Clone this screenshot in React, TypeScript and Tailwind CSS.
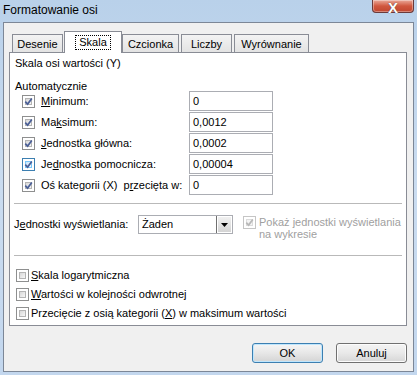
import React from "react";

// "Formatowanie osi" dialog – Vista style, tab "Skala"

type CheckProps = { checked?: boolean; hot?: boolean; disabled?: boolean };

function Check({ checked = false, hot = false, disabled = false }: CheckProps) {
  const outer = disabled
    ? "border-[#c5c5c5]"
    : hot
      ? "border-[#3c7fb1]"
      : "border-[#8e8f8f]";
  const inner = disabled
    ? "from-[#f4f4f4] to-[#f4f4f4] border-[#dcdcdc]"
    : hot
      ? "from-[#c6e4fb] to-[#f2f9fe] border-[#79c6f9]"
      : "from-[#d8d8d8] to-[#f7f7f7] border-[#b4b4b4]";
  return (
    <span className={["relative flex h-[13px] w-[13px] shrink-0 items-center justify-center border bg-white", outer].join(" ")}>
      <span className={["absolute inset-[2px] border bg-gradient-to-br", inner].join(" ")} />
      {checked && (
        <svg viewBox="0 0 9 9" className="relative h-[9px] w-[9px]">
          <path
            d="M1.3 4.6 L3.6 7.1 L7.8 1.4"
            fill="none"
            stroke={disabled ? "#b8b8b8" : "#4a5f97"}
            strokeWidth="1.7"
          />
        </svg>
      )}
    </span>
  );
}

function Key({ children }: { children: React.ReactNode }) {
  return <span className="underline underline-offset-[1px]">{children}</span>;
}

function Field({ value }: { value: string }) {
  return (
    <div className="flex h-[20px] w-[84px] items-center border border-[#abadb3] bg-white pl-[3px] text-black">
      {value}
    </div>
  );
}

function Tab({ label, className }: { label: string; className: string }) {
  return (
    <div
      className={[
        "flex h-[18px] items-center justify-center border border-b-0 border-[#898c95] bg-gradient-to-b from-[#f3f3f3] to-[#e3e3e3] pt-px",
        className,
      ].join(" ")}
    >
      {label}
    </div>
  );
}

const autoRows: { label: React.ReactNode; value: string; hot?: boolean }[] = [
  { label: <><Key>M</Key>inimum:</>, value: "0" },
  { label: <>Ma<Key>k</Key>simum:</>, value: "0,0012" },
  { label: <><Key>J</Key>ednostka główna:</>, value: "0,0002" },
  { label: <>Je<Key>d</Key>nostka pomocnicza:</>, value: "0,00004", hot: true },
  { label: <>Oś kategorii (X)&nbsp; p<Key>r</Key>zecięta w:</>, value: "0" },
];

const options: React.ReactNode[] = [
  <><Key>S</Key>kala logarytmiczna</>,
  <><Key>W</Key>artości w kolejności odwrotnej</>,
  <>Przecięcie z osią kategorii (<Key>X</Key>) w maksimum wartości</>,
];

export default function App() {
  return (
    <div className="relative h-[375px] w-[417px] overflow-hidden bg-gradient-to-b from-[#b9d1ea] via-[#cadcf0] to-[#c3d7ee] font-['Liberation_Sans',Arial,sans-serif] text-[11px] text-black">
      {/* Title bar */}
      <div className="flex h-[22px] items-center pl-[3px] pb-[2px] text-[12px] text-black">
        Formatowanie osi
      </div>
      <div className="absolute right-[3px] top-0 flex h-[13px] w-[42px] items-end justify-center rounded-b-[4px] border border-t-0 border-[#6b3a3a] bg-gradient-to-b from-[#e9a99a] via-[#d0573f] to-[#c0462f] shadow-[inset_0_0_0_1px_rgba(255,255,255,0.35)]">
        <span className="mb-[-3px] text-[15px] font-bold leading-[15px] text-white [text-shadow:0_0_1px_#333]">X</span>
      </div>

      {/* Client area */}
      <div className="ml-[3px] h-[350px] w-[411px] border border-[#7c8797] bg-[#f0f0f0]">
        {/* Tabs */}
        <div className="flex h-[29px] items-end pl-[8px]">
          <Tab label="Desenie" className="w-[51px]" />
          <div className="relative z-10 -mb-px ml-px flex h-[22px] w-[58px] items-center justify-center border border-b-0 border-[#898c95] bg-white pb-px">
            <span className="border border-dotted border-black px-[3px] leading-[13px]">Skala</span>
          </div>
          <Tab label="Czcionka" className="w-[57px]" />
          <Tab label="Liczby" className="ml-[2px] w-[51px]" />
          <Tab label="Wyrównanie" className="ml-[2px] w-[75px]" />
        </div>

        {/* Tab panel */}
        <div className="ml-[5px] h-[274px] w-[398px] border border-[#898c95] bg-white">
          <div className="ml-[5px] mt-[3px] h-[14px] leading-[14px]">Skala osi wartości (Y)</div>
          <div className="ml-[5px] mt-[9px] h-[14px] leading-[14px]">Automatycznie</div>

          <div className="-mt-[2px]">
            {autoRows.map((r, i) => (
              <div key={i} className="flex h-[21px] items-start pl-[12px]">
                <div className="flex h-[20px] items-center">
                  <Check checked hot={r.hot} />
                </div>
                <div className="ml-[6px] flex h-[20px] w-[148px] items-center">{r.label}</div>
                <Field value={r.value} />
              </div>
            ))}
          </div>

          <div className="mx-[4px] mt-[7px] h-px bg-[#b9b9b9]" />

          {/* Display units */}
          <div className="mt-[11px] flex h-[40px] items-start pl-[4px]">
            <div className="h-[19px] w-[124px] leading-[19px]">
              J<Key>e</Key>dnostki wyświetlania:
            </div>
            <div className="flex h-[19px] w-[95px] items-center justify-between border border-[#abadb3] bg-white pl-[3px]">
              <span>Żaden</span>
              <div className="flex h-[17px] w-[16px] items-center justify-center border-l border-[#707070] bg-gradient-to-b from-[#f2f2f2] to-[#d2d2d2] shadow-[inset_0_0_0_1px_#fff]">
                <svg viewBox="0 0 7 4" className="h-[4px] w-[7px]">
                  <path d="M0 0 H7 L3.5 4 Z" fill="#000" />
                </svg>
              </div>
            </div>
            <div className="ml-[10px] mt-px">
              <Check checked disabled />
            </div>
            <div className="ml-[3px] mt-px leading-[12px] text-[#a0a0a0]">
              Pokaż jednostki wyświetlania
              <br />
              na wykresie
            </div>
          </div>

          <div className="mx-[4px] h-px bg-[#b9b9b9]" />

          <div className="mt-[10px]">
            {options.map((o, i) => (
              <div key={i} className="flex h-[19px] items-center pl-[6px]">
                <Check />
                <span className="ml-[2px]">{o}</span>
              </div>
            ))}
          </div>
        </div>

        {/* Buttons */}
        <div className="mt-[17px] flex justify-end gap-[13px] pr-[6px]">
          <button className="h-[20px] w-[71px] rounded-[3px] border border-[#3c7fb1] bg-gradient-to-b from-[#f6f6f6] via-[#e7e7e7] to-[#d4d4d4] text-[11px] shadow-[inset_0_0_0_1px_#bfe6fd]">
            OK
          </button>
          <button className="h-[20px] w-[71px] rounded-[3px] border border-[#707070] bg-gradient-to-b from-[#f4f4f4] via-[#e9e9e9] to-[#d6d6d6] text-[11px] shadow-[inset_0_0_0_1px_#fcfcfc]">
            Anuluj
          </button>
        </div>
      </div>
    </div>
  );
}
